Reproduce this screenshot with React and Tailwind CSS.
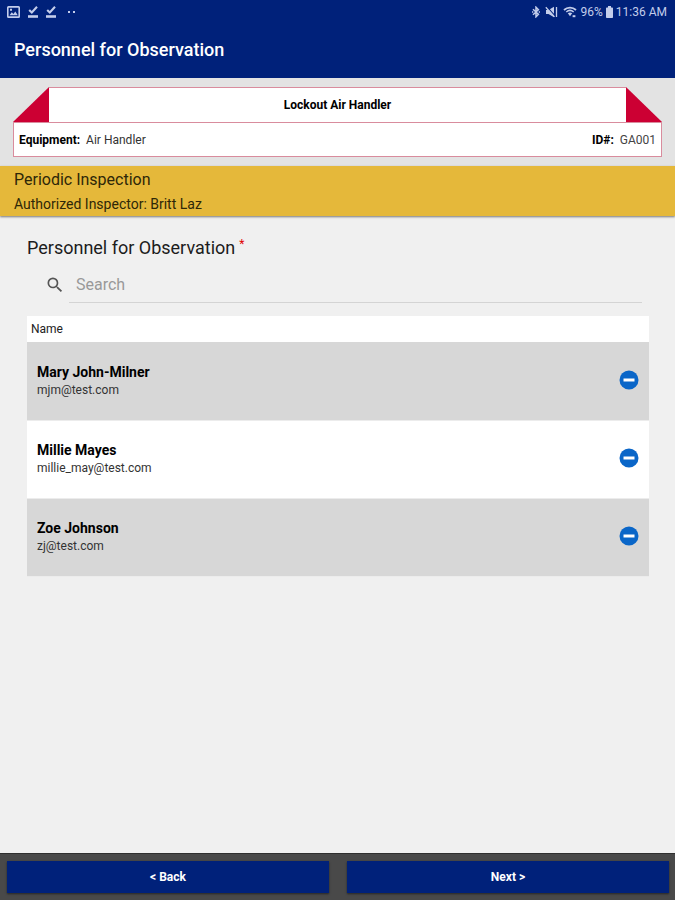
import { useState } from "react";

const PEOPLE = [
  { name: "Mary John-Milner", email: "mjm@test.com" },
  { name: "Millie Mayes", email: "millie_may@test.com" },
  { name: "Zoe Johnson", email: "zj@test.com" },
];

function PictureIcon() {
  return (
    <svg viewBox="0 0 13 12" className="h-3 w-[13px]" fill="currentColor" aria-hidden="true">
      <path fillRule="evenodd" d="M1.500 0h10A1.500 1.500 0 0 1 13 1.500v9a1.500 1.500 0 0 1-1.500 1.500h-10A1.500 1.500 0 0 1 0 10.500v-9A1.500 1.500 0 0 1 1.500 0zM1.600 1.700v8.600h9.800V1.700zM2.500 9.200l2.300-3 1.600 1.700L8.300 5.500l2.500 3.700zM3 2.800h2v2H3z" />
    </svg>
  );
}

function CheckIcon() {
  return (
    <svg viewBox="0 0 10 12" className="h-3 w-2.5" fill="none" stroke="currentColor" aria-hidden="true">
      <path d="M1.200 3.900l2.600 2.600L9 .8" strokeWidth="2.100" />
      <path d="M0 10.500h10" strokeWidth="2.600" />
    </svg>
  );
}

function BluetoothIcon() {
  return (
    <svg viewBox="0 0 8 12" className="h-3 w-2" fill="none" stroke="currentColor" aria-hidden="true">
      <path d="M1 3.300l5.400 5L4 10.800V1.200l2.400 2.500-5.400 5" strokeWidth="1.500" />
      <path d="M0 6h1.300M6.700 6H8" strokeWidth="1.300" />
    </svg>
  );
}

function MuteIcon() {
  return (
    <svg viewBox="0 0 13 12" className="h-3 w-[13px]" fill="currentColor" aria-hidden="true">
      <path d="M1 4h2.500L9 .8v10.400L3.500 8H1z" />
      <path d="M1.500 .4l9 9.900" stroke="#00217a" strokeWidth="1.200" />
      <path d="M.8 1.300l8.700 9.600M11.500 1v10" stroke="currentColor" strokeWidth="1.300" />
    </svg>
  );
}

function WifiIcon() {
  return (
    <svg viewBox="0 0 14 12" className="h-3 w-3.5" fill="none" stroke="currentColor" aria-hidden="true">
      <path d="M1 4C4.500 .7 9.500 .7 13 4" strokeWidth="1.800" />
      <path d="M3.300 6c2.300-2 5.100-2 7.400 0" strokeWidth="1.500" />
      <path d="M4.800 7.300c1.300-1 3.100-1 4.400 0L7 10.200z" fill="currentColor" stroke="none" />
      <path d="M9.600 10.200h2.800" strokeWidth="2" />
    </svg>
  );
}

function BatteryIcon() {
  return (
    <svg viewBox="0 0 7 12" className="h-3 w-[7px]" fill="currentColor" aria-hidden="true">
      <path d="M2 0h3v1.500h1.200q.8 0 .8.800v8.900q0 .8-.8.800H.8q-.8 0-.8-.8V2.300q0-.8.800-.8H2z" />
    </svg>
  );
}

function StatusBar() {
  return (
    <div className="flex h-6 items-center justify-between pl-[7px] pr-2 text-[#c3cdeb]">
      <div className="flex items-center gap-2">
        <PictureIcon />
        <CheckIcon />
        <CheckIcon />
        <span className="flex gap-[3px] pl-1">
          <i className="size-0.5 bg-current" />
          <i className="size-0.5 bg-current" />
        </span>
      </div>
      <div className="flex items-center text-[12px] leading-4">
        <span className="mr-1 flex items-center gap-[5px]">
          <BluetoothIcon />
          <MuteIcon />
          <WifiIcon />
        </span>
        <span className="mr-[3px]">96%</span>
        <BatteryIcon />
        <span className="ml-[3px]">11:36 AM</span>
      </div>
    </div>
  );
}

function TagCard() {
  return (
    <section className="bg-[#e3e3e3] px-[13px] pt-[9px] pb-[9px] text-[12px]">
      <div className="flex h-[35px]">
        <svg viewBox="0 0 36 35" className="h-full w-9" aria-hidden="true">
          <path d="M0 35L36 0v35z" fill="#cc0033" />
        </svg>
        <h2 className="flex flex-1 items-center justify-center border-t border-[#d98c9d] bg-white font-bold">
          Lockout Air Handler
        </h2>
        <svg viewBox="0 0 36 35" className="h-full w-9" aria-hidden="true">
          <path d="M0 0l36 35H0z" fill="#cc0033" />
        </svg>
      </div>
      <dl className="flex h-[35px] items-center justify-between border border-[#d98c9d] bg-white px-[5px]">
        <div className="flex gap-1.5">
          <dt className="font-bold">Equipment:</dt>
          <dd className="text-[#333]">Air Handler</dd>
        </div>
        <div className="flex gap-1.5">
          <dt className="font-bold">ID#:</dt>
          <dd className="text-[#444]">GA001</dd>
        </div>
      </dl>
    </section>
  );
}

export default function App() {
  const [people, setPeople] = useState(PEOPLE);
  const [query, setQuery] = useState("");
  const shown = people.filter((p) => p.name.toLowerCase().includes(query.toLowerCase()));

  return (
    <div className="flex min-h-screen flex-col bg-[#f0f0f0] font-['Roboto',sans-serif] text-black">
      <header className="bg-[#00217a]">
        <StatusBar />
        <h1 className="px-[14px] pt-[14px] pb-4 text-[18px] leading-6 font-medium text-white">
          Personnel for Observation
        </h1>
      </header>

      <TagCard />

      <section className="bg-[#e5b83a] px-[14px] pt-0.5 text-[#2e2708] shadow-[0_1px_2px_rgba(0,0,0,0.5)]">
        <p className="text-[16px] leading-6">Periodic Inspection</p>
        <p className="text-[14px] leading-6">Authorized Inspector: Britt Laz</p>
      </section>

      <main className="flex-1 pt-5 pr-[26px] pl-[27px]">
        <h2 className="flex gap-1 text-[18px] leading-6 text-[#1c1c1c]">
          Personnel for Observation
          <span className="text-[12px] leading-4 text-[#e00000]">*</span>
        </h2>

        <div className="mt-[7px] mr-[7px] ml-[18px] flex h-9 items-center">
          <svg viewBox="0 0 24 24" className="mr-1 size-5" fill="#555" aria-hidden="true">
            <path d="M15.500 14h-.79l-.28-.27A6.470 6.470 0 0 0 16 9.500 6.500 6.500 0 1 0 9.500 16c1.610 0 3.090-.59 4.230-1.570l.27.28v.79l5 4.990L20.490 19l-4.990-5zm-6 0C7.010 14 5 11.990 5 9.500S7.010 5 9.500 5 14 7.010 14 9.500 11.990 14 9.500 14z" />
          </svg>
          <input
            type="search"
            aria-label="Search"
            placeholder="Search"
            value={query}
            onChange={(e) => setQuery(e.target.value)}
            className="h-full min-w-0 flex-1 border-b border-[#d4d4d4] bg-transparent px-[7px] text-[16px] outline-none placeholder:text-[#999]"
          />
        </div>

        <table className="mt-[13px] w-full border-collapse">
          <thead>
            <tr className="h-[26px] bg-white">
              <th scope="col" colSpan={2} className="px-1 text-left text-[12px] leading-4 font-normal text-[#222]">
                Name
              </th>
            </tr>
          </thead>
          <tbody>
            {shown.map((p) => (
              <tr key={p.email} className="h-[78px] border-b border-[#ececec] odd:bg-[#d7d7d7] even:bg-white">
                <td className="pl-[10px]">
                  <p className="text-[14px] leading-[18px] font-bold">{p.name}</p>
                  <p className="text-[12px] leading-[18px] text-[#333]">{p.email}</p>
                </td>
                <td className="w-12 pr-2 pb-0.5 text-right">
                  <button
                    type="button"
                    aria-label={`Remove ${p.name}`}
                    onClick={() => setPeople(people.filter((o) => o !== p))}
                    className="align-middle"
                  >
                    <svg viewBox="0 0 24 24" className="size-6" aria-hidden="true">
                      <circle cx="12" cy="12" r="9.500" fill="#0a66c8" />
                      <path d="M6.500 10.500h11v3h-11z" fill="#fff" />
                    </svg>
                  </button>
                </td>
              </tr>
            ))}
          </tbody>
        </table>
      </main>

      <nav className="flex gap-[18px] border-t border-[#2f2f2f] bg-[#494949] pt-[7px] pr-1.5 pb-[7px] pl-[7px] text-[12px] font-bold text-white">
        <button type="button" className="h-8 flex-1 bg-[#00217a] shadow-[0_1px_2px_rgba(0,0,0,0.5)]">
          &lt; Back
        </button>
        <button type="button" className="h-8 flex-1 bg-[#00217a] shadow-[0_1px_2px_rgba(0,0,0,0.5)]">
          Next &gt;
        </button>
      </nav>
    </div>
  );
}
